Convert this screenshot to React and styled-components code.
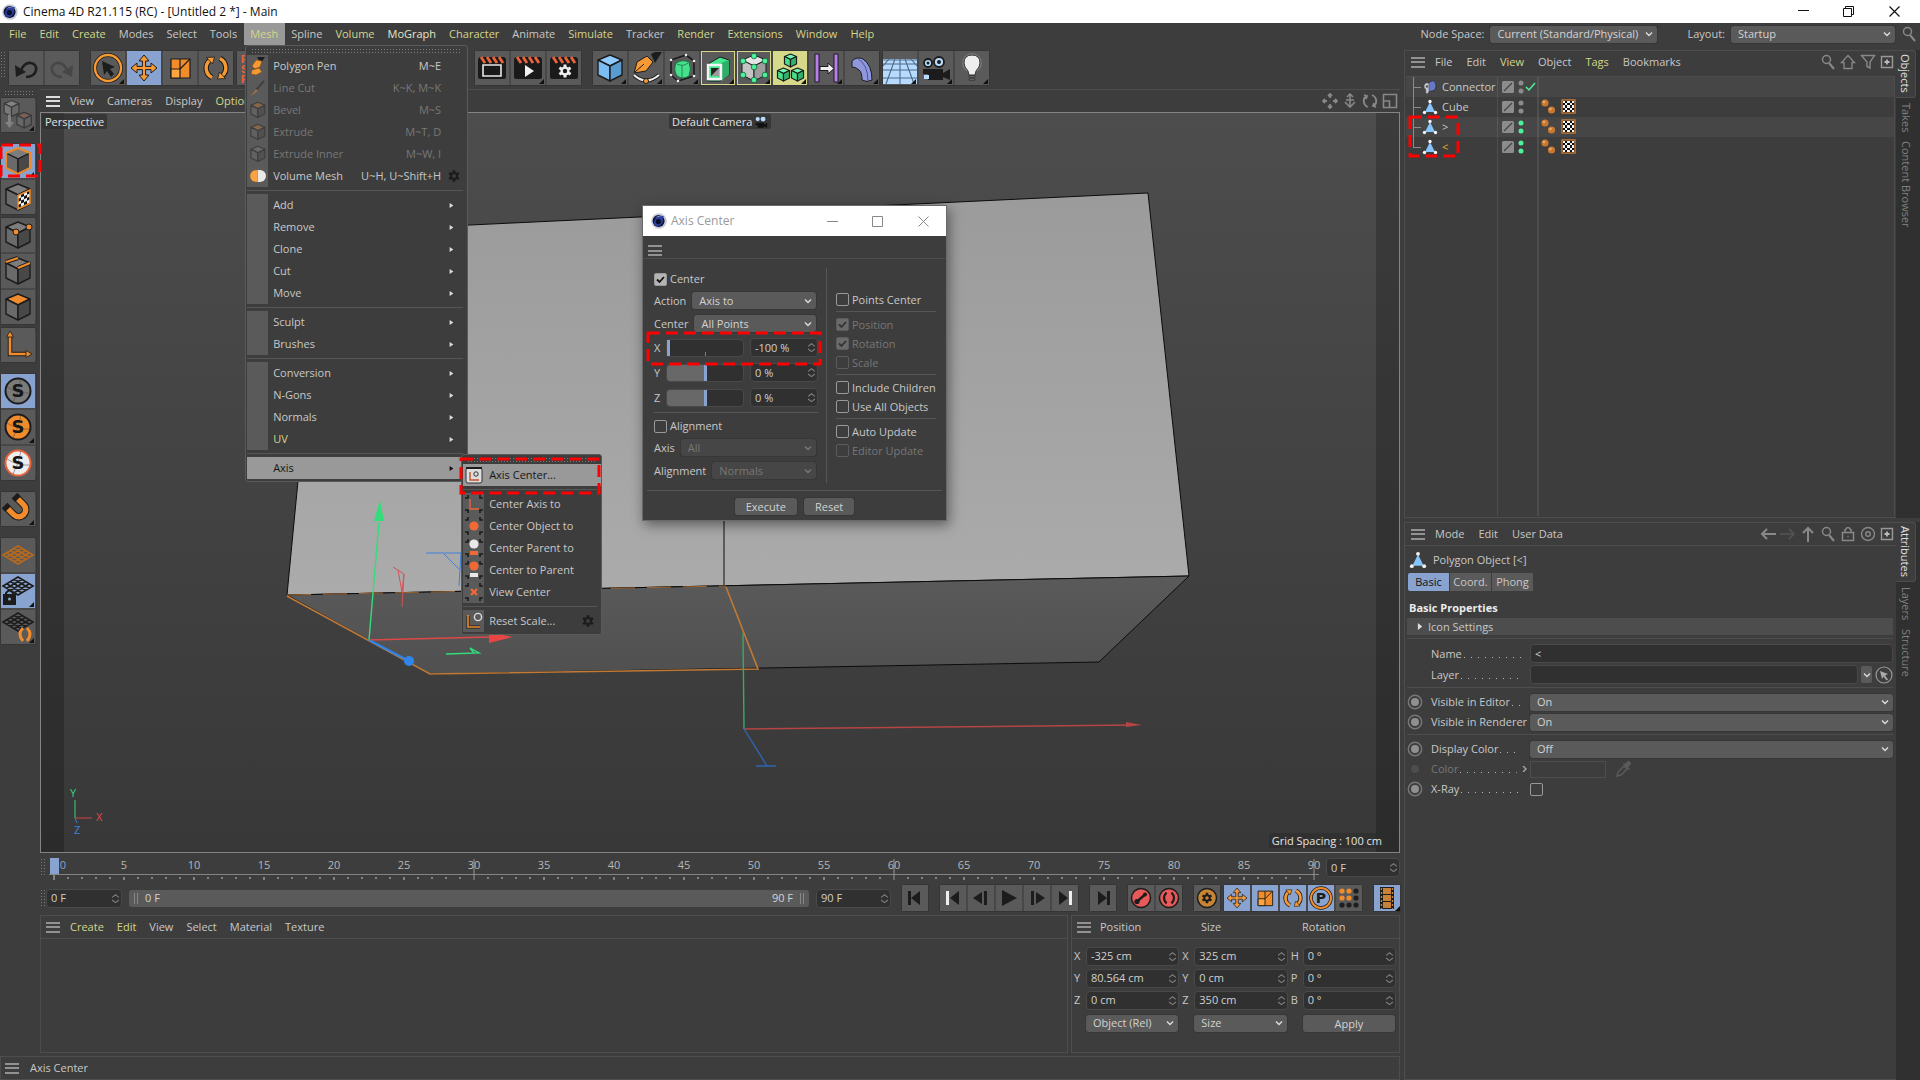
import React from "react";
import styled, { createGlobalStyle, css } from "styled-components";

const MENUS = [
  ["File", 1], ["Edit", 1], ["Create", 1], ["Modes", 0], ["Select", 0], ["Tools", 0],
  ["Mesh", 1], ["Spline", 0], ["Volume", 1], ["MoGraph", 2], ["Character", 1], ["Animate", 0],
  ["Simulate", 1], ["Tracker", 0], ["Render", 1], ["Extensions", 1], ["Window", 1], ["Help", 1],
];

const INK = "#1c1c1c";
const ORANGE = "#f08c2c";
const GREEN = "#4df29a";

/* ---------- icons ---------- */

const Ico = ({ s = 34, vb = 34, children }) => (
  <svg width={s} height={s} viewBox={`0 0 ${vb} ${vb}`} fill="none" aria-hidden="true">
    {children}
  </svg>
);

const Corner = () => <path d="M33 28v5h-5z" fill="#111" />;

const CubeShape = ({ top = "#7d7d7d", left = "#6a6a6a", right = "#484848", line = INK, w = 1.4 }) => (
  <g stroke={line} strokeWidth={w} strokeLinejoin="round">
    <path d="M17 4l12 5-12 6-12-6z" fill={top} />
    <path d="M5 9l12 6v15L5 24z" fill={left} />
    <path d="M29 9l-12 6v15l12-6z" fill={right} />
  </g>
);

const Logo = ({ s = 16 }) => (
  <Ico s={s} vb={16}>
    <circle cx="8" cy="8" r="7.800" fill="#c9ccd6" />
    <circle cx="7.600" cy="8" r="6" fill="#0d1238" />
    <path d="M3 10c0-5 4-7 10-7-1 1-1 2-1 4 0 4-3 6-6 6-2 0-3-1-3-3z" fill="#2b3f9c" />
    <circle cx="7.400" cy="8.600" r="2.600" fill="#0a0e2a" />
    <path d="M4 5c2-2 5-3 8-2-3 0-5 1-8 2z" fill="#8fa2e8" />
  </Ico>
);

const MoveGlyph = () => (
  <g stroke={INK} strokeWidth="1" fill="#f79a35" strokeLinejoin="round">
    <path d="M17 4l5 6h-3.400v5.400H24V12l6 5-6 5v-3.400h-5.400V24H22l-5 6-5-6h3.400v-5.400H10V22l-6-5 6-5v3.400h5.400V10H12z" />
  </g>
);

const ScaleGlyph = () => (
  <g stroke={INK} strokeWidth="1.200" fill="#f28c2a">
    <path d="M8 8h19v19H8z" />
    <path d="M8 18h9v9H8z" fill="#ffa53f" />
    <path d="M17 18l10-10M17 18V8" />
  </g>
);

const RotateGlyph = () => (
  <g>
    <path d="M13 26.500A10.500 10.500 0 0 1 11 9M21 7.500A10.500 10.500 0 0 1 23 25" stroke={INK} strokeWidth="5.500" />
    <path d="M13 26.500A10.500 10.500 0 0 1 11 9M21 7.500A10.500 10.500 0 0 1 23 25" stroke="#f79a35" strokeWidth="3.400" />
    <path d="M7.500 6.500l8-.5-2 7zM26.500 27.500l-8 .5 2-7z" fill="#f79a35" stroke={INK} strokeWidth=".8" />
  </g>
);

const GearPath = ({ color = "#1c1c1c", hole = "#3d3d3d" }) => (
  <g>
    <circle cx="8" cy="8" r="4.600" fill={color} />
    <path d="M8 1.500v13M2.400 4.800l11.200 6.400M13.600 4.800L2.400 11.200" stroke={color} strokeWidth="3" />
    <circle cx="8" cy="8" r="2.200" fill={hole} />
  </g>
);

const Gear = () => (
  <Ico s={14} vb={16}><GearPath /></Ico>
);

const Clap = ({ children }) => (
  <Ico>
    <path d="M3 9q0-3 3-3h22q3 0 3 3v17q0 2-2 2H5q-2 0-2-2z" fill="#1a1a1a" />
    <path d="M6 6l4 6M12 6l4 6M18 6l4 6M24 6l4 6" stroke="#e9643c" strokeWidth="2.800" />
    {children}
  </Ico>
);

const Checker = ({ x, y, c }) => (
  <g>
    <rect x={x} y={y} width={c * 4} height={c * 4} fill="#f2f2f2" />
    {[0, 1, 2, 3].map((r) =>
      [0, 1, 2, 3].map((k) =>
        (r + k) % 2 ? <rect key={`${r}${k}`} x={x + k * c} y={y + r * c} width={c} height={c} fill="#151515" /> : null
      )
    )}
  </g>
);

const GridPlane = ({ color }) => (
  <path
    d="M17 3L32 12 17 21 2 12zM13.200 5.300l15 9M9.500 7.500l15 9M5.700 9.800l15 9M20.800 5.300l-15 9M24.500 7.500l-15 9M28.300 9.800l-15 9"
    stroke={color} strokeWidth="1.600"
  />
);

const Solo = ({ fill, ring = INK, children }) => (
  <Ico>
    <circle cx="17" cy="17" r="12.500" fill={fill} stroke={ring} strokeWidth="2" />
    <path d="M6 13q11 7 22 6M20 5q-2 12-8 23" stroke="#444" strokeWidth=".8" opacity=".6" />
    <text x="17" y="23" textAnchor="middle" fontFamily="DejaVu Sans" fontWeight="700" fontSize="18" fill="#161616">S</text>
    {children}
  </Ico>
);

const ICONS = {
  undo: (
    <Ico><path d="M17 26c12 0 13-13 5-14-5-1-8 3-10 7" stroke="#1e1e1e" strokeWidth="2.600" /><path d="M6 14l1 12 10-5z" fill="#1e1e1e" /></Ico>
  ),
  redo: (
    <Ico><path d="M17 26c-12 0-13-13-5-14 5-1 8 3 10 7" stroke="#474747" strokeWidth="2.600" /><path d="M28 14l-1 12-10-5z" fill="#474747" /></Ico>
  ),
  select: (
    <Ico><circle cx="17" cy="17" r="13" stroke={INK} strokeWidth="4" /><circle cx="17" cy="17" r="13" stroke="#f79a35" strokeWidth="2.400" />
      <path d="M11 10l13 6-5 2 4 5-3 3-4-6-3 4z" fill={INK} /><Corner /></Ico>
  ),
  move: <Ico><MoveGlyph /></Ico>,
  scale: <Ico><ScaleGlyph /></Ico>,
  rotate: <Ico><RotateGlyph /></Ico>,
  psr: (
    <Ico><text x="4" y="12" fontFamily="Liberation Sans" fontWeight="700" fontSize="11" fill="#e9643c">P</text>
      <text x="4" y="22" fontFamily="Liberation Sans" fontWeight="700" fontSize="11" fill="#e9643c">S</text>
      <text x="4" y="32" fontFamily="Liberation Sans" fontWeight="700" fontSize="11" fill="#e9643c">R</text></Ico>
  ),
  render: <Clap><path d="M8 14h18v11H8z" stroke="#e8e8e8" strokeWidth="1.600" /></Clap>,
  renderPv: <Clap><path d="M14 14l9 6-9 6z" fill="#f2f2f2" /><Corner /></Clap>,
  renderSet: (
    <Clap><g transform="translate(10 12)"><GearPath color="#eee" hole="#1a1a1a" /></g></Clap>
  ),
  cube: <Ico><CubeShape top="#8fcbff" left="#7cbcf5" right="#5a9bd0" /><Corner /></Ico>,
  pen: (
    <Ico><path d="M5 24q12 11 25 0" stroke={INK} strokeWidth="4" /><path d="M5 24q12 11 25 0" stroke="#eee" strokeWidth="2.200" />
      <path d="M22 3l4-2h7L26 12z" fill={INK} /><path d="M5 22L8 11l10-6 6 6-7 9z" fill="#f79a35" stroke={INK} /><path d="M6 21l9-8" stroke={INK} />
      <circle cx="17" cy="30" r="2.500" fill="#f79a35" stroke={INK} /><Corner /></Ico>
  ),
  subdiv: (
    <Ico><path d="M6 9l15-5 8 6v15l-16 5-7-6z" stroke={INK} strokeWidth="1.600" /><path d="M11 12q6-4 13-1 3 7 0 14-6 4-12 0-4-6-1-13z" fill="#46e08c" stroke="#1d6b43" />
      <path d="M12 13q6 3 11-1M17 14v12" stroke="#1d8a52" /><g fill="#eee"><circle cx="6" cy="9" r="1.300" /><circle cx="21" cy="4" r="1.300" /><circle cx="29" cy="10" r="1.300" /><circle cx="29" cy="25" r="1.300" /><circle cx="13" cy="30" r="1.300" /><circle cx="6" cy="24" r="1.300" /></g><Corner /></Ico>
  ),
  extrude: (
    <Ico><path d="M7 13l12-7 9 3v15l-9 6H7z" fill="#46e890" stroke={INK} /><path d="M20 12l8-3v15l-8 6z" fill="#2fae6a" />
      <path d="M7 14h13v14H7z" stroke="#f4f4f4" strokeWidth="2.400" fill="#46e890" /><path d="M10 17h8v8h-8z" fill="#222" /><path d="M10 25l8-8v8z" fill="#9a9a9a" /><Corner /></Ico>
  ),
  lattice: (
    <Ico><CubeShape top="#e4e4e4" left="#c4c4c4" right="#9d9d9d" w={1} />
      <g fill={GREEN} stroke="#156138" strokeWidth=".8">{[[17, 5], [6, 10], [28, 10], [17, 16], [6, 24], [28, 24], [17, 29]].map(([a, b]) => <circle key={`${a}-${b}`} cx={a} cy={b} r="2.800" />)}</g><Corner /></Ico>
  ),
  cloner: (
    <Ico>{[[9, 1], [2, 15], [16, 15]].map(([a, b]) => (
      <g key={a} transform={`translate(${a} ${b}) scale(.5)`}><CubeShape top="#6df5b0" left="#46e08c" right="#2fb36e" w={2.400} /></g>
    ))}<Corner /></Ico>
  ),
  field: (
    <Ico><g fill="#b77ff0" stroke={INK}><path d="M6 3h4v28H6zM25 3h4v28h-4z" /></g><path d="M11 15.500h8V12l6 5.500-6 5.500v-3.500h-8z" fill="#eee" stroke={INK} /><Corner /></Ico>
  ),
  bend: (
    <Ico><path d="M7 10q5-5 11-2 9 6 9 21-5 3-10 0 0-8-3-10-3-3-7-3z" fill="#8f97dd" stroke={INK} strokeLinejoin="round" /><path d="M12 7q11 6 11 23" stroke="#4b549b" /><Corner /></Ico>
  ),
  floor: (
    <Ico><path d="M0 8h34v25H0z" fill="#b7dbff" /><path d="M0 9h34M0 13h34M0 19h34M0 27h34M17 8v25M12 8L3 33M22 8l9 25M6 8L0 15M28 8l6 7" stroke="#4d6a88" strokeWidth="1.100" /><Corner /></Ico>
  ),
  camera: (
    <Ico><circle cx="9" cy="12" r="4" fill="#b7dbff" stroke={INK} strokeWidth="1.800" /><circle cx="20" cy="11" r="5" fill="#b7dbff" stroke={INK} strokeWidth="1.800" /><circle cx="9" cy="12" r="1.500" fill={INK} /><circle cx="20" cy="11" r="2" fill={INK} />
      <path d="M4 18h20v4l7-4v11l-7-3v3H9v-6H4z" fill={INK} /><path d="M5 24h5v4H5z" fill="#b7dbff" /><Corner /></Ico>
  ),
  light: (
    <Ico><circle cx="17" cy="12" r="10" fill="#777" /><path d="M17 4q8 0 8 8 0 4-4 8l-1 4h-6l-1-4q-4-4-4-8 0-8 8-8z" fill="#eee" stroke="#333" /><path d="M14 25h6v1h-6zM14 28h6v1h-6z" fill="#ddd" stroke="#222" strokeWidth=".8" /><Corner /></Ico>
  ),
  editable: (
    <Ico><g opacity=".5"><g transform="translate(0 0) scale(.62)"><CubeShape top="#aaa" left="#999" right="#777" w={2} /></g><g transform="translate(13 12) scale(.6)"><CubeShape top="#a0624c" left="#777" right="#666" w={2} /></g><path d="M7 17h3v7h3l-4.500 6L4 24h3z" fill="#aaa" /></g><Corner /></Ico>
  ),
  model: (
    <Ico><CubeShape w={1.200} /><path d="M17 4l12 5v15l-12 6-12-6V9z" stroke={ORANGE} strokeWidth="2" /><Corner /></Ico>
  ),
  texture: (
    <Ico><CubeShape /><g transform="matrix(1 -.46 0 1 0 15.800)"><Checker x={17} y={8} c={3} /><rect x="17" y="7.500" width="12" height="13.500" stroke={ORANGE} strokeWidth="1.600" /></g></Ico>
  ),
  point: <Ico><CubeShape /><circle cx="15" cy="14" r="3" fill={ORANGE} stroke={INK} /><circle cx="28" cy="9" r="3" fill={ORANGE} stroke={INK} /></Ico>,
  edge: <Ico><CubeShape /><path d="M5 8l12-4M17 14l12-5" stroke={INK} strokeWidth="4" /><path d="M5 8l12-4M17 14l12-5" stroke={ORANGE} strokeWidth="2.200" /></Ico>,
  poly: <Ico><CubeShape top={ORANGE} /></Ico>,
  axis: <Ico><path d="M9 8v18h18" stroke={INK} strokeWidth="4.500" /><path d="M9 8v18h18" stroke={ORANGE} strokeWidth="2.600" /><path d="M9 3l3.500 6h-7zM31 26l-6-3.500v7z" fill={ORANGE} stroke={INK} strokeWidth=".8" /></Ico>,
  soloOff: <Solo fill="#7b7b7b" />,
  soloOn: <Solo fill={ORANGE}><Corner /></Solo>,
  soloHi: <Solo fill="#eee" ring="#e9643c" />,
  magnet: (
    <Ico><g transform="rotate(-45 17 17)"><path d="M10 8v10a7 7 0 0 0 14 0V8" stroke={INK} strokeWidth="7.500" /><path d="M10 9v9a7 7 0 0 0 14 0V9" stroke={ORANGE} strokeWidth="5.500" /><path d="M6 5h8v5H6zM20 5h8v5h-8z" fill={INK} /></g><Corner /></Ico>
  ),
  plane: <Ico><g transform="translate(0 5)"><GridPlane color="#b8691b" /></g></Ico>,
  planeLock: <Ico><GridPlane color="#1c1c1c" /><path d="M5 21v-2q3.500-5 7 0v2" stroke={INK} strokeWidth="2" /><path d="M2 20h13v11H2z" fill={INK} /><circle cx="8.500" cy="25" r="1.500" fill="#88a3cf" /><Corner /></Ico>,
  planeAuto: <Ico><GridPlane color="#1c1c1c" /><path d="M22 18q-6 6 0 13M26 18q6 6 0 13" stroke={ORANGE} strokeWidth="3" /><Corner /></Ico>,
};

const ViewportIcon = ({ d, w = 1.6 }) => (
  <Ico s={16} vb={16}><path d={d} stroke="#888" strokeWidth={w} /></Ico>
);

const Search = ({ s = 16 }) => (
  <Ico s={s} vb={16}><circle cx="6.500" cy="5.500" r="4" stroke="#888" strokeWidth="1.500" /><path d="M9 9l5 6" stroke="#888" strokeWidth="2" /></Ico>
);
const PlusBox = () => (
  <Ico s={14} vb={14}><path d="M1.500 1.500h11v11h-11z" stroke="#999" strokeWidth="1.400" /><path d="M7 4.500v5M4.500 7h5" stroke="#bbb" strokeWidth="1.800" /></Ico>
);
const PolyObj = ({ s = 16 }) => (
  <Ico s={s} vb={16}>
    <path d="M8 3l5 10H3z" fill="#86c5fb" />
    <g fill="#f2f2f2"><circle cx="8" cy="2.500" r="1.700" /><circle cx="2.500" cy="13.500" r="1.700" /><circle cx="13.500" cy="13.500" r="1.700" /></g>
  </Ico>
);
const ConnectorIcon = () => (
  <Ico s={16} vb={16}>
    <path d="M6 4l5-2.500q3 2 3 5t-2 5L6 13z" fill="#6479c8" stroke="#222" strokeWidth=".6" />
    <path d="M2 6q3-4 5-1v8q-1 2-3 2l-.500-5q-2-1-1.500-4z" fill="#c4c8d6" stroke="#444" strokeWidth=".6" />
    <circle cx="5" cy="7.500" r="1.200" fill="#555" />
  </Ico>
);

/* ---------- shared parts ---------- */

const GlobalStyle = createGlobalStyle`
  * { box-sizing: border-box; }
  body { margin: 0; background: #3d3d3d; }
  body, button, input, select {
    font-family: "Open Sans", "Noto Sans", "Noto Sans CJK KR", sans-serif;
    font-size: 11px;
    line-height: 16px;
    color: #c8c8c8;
  }
  button, input, select { margin: 0; padding: 0; border: 0; background: none; outline: 0; }
  svg { display: block; flex: none; }
`;

const grip = css`
  background-image: radial-gradient(circle, #7a7a7a 0.5px, transparent 1px);
  background-size: 3px 3px;
`;

const GripV = styled.div`
  width: 6px;
  height: ${(p) => p.$h || 28}px;
  flex: none;
  ${grip}
`;
const GripH = styled.div`
  height: 6px;
  ${grip}
`;

const Burger = styled.button`
  width: 14px;
  height: 11px;
  flex: none;
  border-top: 2px solid ${(p) => p.$c || "#929292"};
  border-bottom: 2px solid ${(p) => p.$c || "#929292"};
  background: linear-gradient(${(p) => p.$c || "#929292"}, ${(p) => p.$c || "#929292"}) center / 100% 2px no-repeat;
`;

const MenuWord = styled.button`
  color: ${(p) => (p.$tone === 1 ? "#d3d68a" : p.$tone === 2 ? "#e6e6c8" : "#c8c8c8")};
  white-space: nowrap;
`;

const SelectBox = styled.span`
  display: grid;
  align-items: center;
  flex: ${(p) => (p.$w ? "none" : 1)};
  width: ${(p) => (p.$w ? `${p.$w}px` : "auto")};
  min-width: 0;
  select, svg { grid-area: 1 / 1; }
  select {
    appearance: none;
    width: 100%;
    height: 17px;
    padding: 0 18px 0 7px;
    border-radius: 3px;
    background: ${(p) => (p.$off ? "#464646" : "#5a5a5a")};
    color: ${(p) => (p.$off ? "#777" : "#d2d2d2")};
    opacity: 1;
    box-shadow: 0 0 0 1px #373737;
  }
  svg { justify-self: end; margin-right: 4px; pointer-events: none; }
`;

const Drop = ({ w, off, value, label }) => (
  <SelectBox $w={w} $off={off}>
    <select aria-label={label} disabled={off} defaultValue={value}>
      <option>{value}</option>
    </select>
    <Ico s={8} vb={8}><path d="M1 2.500l3 3 3-3" stroke={off ? "#777" : "#ddd"} strokeWidth="1.400" /></Ico>
  </SelectBox>
);

const FieldBox = styled.span`
  display: flex;
  align-items: center;
  flex: ${(p) => (p.$w ? "none" : 1)};
  width: ${(p) => (p.$w ? `${p.$w}px` : "auto")};
  min-width: 0;
  height: 19px;
  padding: 0 1px 0 4px;
  background: #303030;
  border: 1px solid #494949;
  border-radius: 4px;
  input { flex: 1; min-width: 0; width: 0; height: 16px; color: #d0d0d0; }
`;

const Num = ({ w, value, label }) => (
  <FieldBox $w={w}>
    <input aria-label={label} defaultValue={value} />
    <Ico s={9} vb={12}><path d="M1.500 4.500L6 1l4.500 3.500M1.500 8L6 11.500 10.500 8" stroke="#808080" strokeWidth="1.400" /></Ico>
  </FieldBox>
);

const TickLabel = styled.label`
  display: flex;
  align-items: center;
  gap: 3px;
  height: ${(p) => p.$h || 19}px;
  color: ${(p) => (p.$off ? "#777" : "#c8c8c8")};
  white-space: nowrap;
`;
const TickBox = styled.span`
  display: grid;
  place-items: center;
  input, svg { grid-area: 1 / 1; }
  svg { pointer-events: none; }
  input {
    appearance: none;
    width: 13px;
    height: 13px;
    border: 1px solid ${(p) => (p.$off ? "#5c5c5c" : "#999")};
    border-radius: 2px;
    &:checked { background: ${(p) => (p.$off ? "#6a6a6a" : "#b4b4b4")}; }
  }
`;

const Tick = ({ on, off, text, h, name }) => (
  <TickLabel $off={off} $h={h}>
    <TickBox $off={off}>
      <input type="checkbox" defaultChecked={on} disabled={off} aria-label={text || name} />
      {on && <Ico s={11} vb={11}><path d="M2 5.500l2.500 2.500L9 3" stroke={off ? "#333" : "#111"} strokeWidth="1.800" /></Ico>}
    </TickBox>
    {text}
  </TickLabel>
);

const PushButton = styled.button`
  height: 17px;
  padding: 0 11px;
  border-radius: 3px;
  background: #5a5a5a;
  color: #d2d2d2;
  line-height: 17px;
  box-shadow: 0 0 0 1px #373737;
`;

const MarkBox = styled.span`
  position: absolute;
  inset: ${(p) => p.$inset};
  pointer-events: none;
  z-index: 5;
  svg { width: 100%; height: 100%; overflow: visible; }
`;
const Mark = ({ inset }) => (
  <MarkBox $inset={inset}>
    <svg><rect width="100%" height="100%" fill="none" stroke="#fe0000" strokeWidth="3" strokeDasharray="12 6" /></svg>
  </MarkBox>
);
const MarkSlot = styled.div`
  position: absolute;
  top: ${(p) => p.$y}px;
  left: ${(p) => p.$x}px;
  width: ${(p) => p.$w}px;
  height: ${(p) => p.$h}px;
`;

/* ---------- window frame ---------- */

const Window = styled.div`
  display: flex;
  flex-direction: column;
  height: 100vh;
  background: #3d3d3d;
`;
const TitleBar = styled.header`
  display: flex;
  align-items: center;
  gap: 5px;
  height: 23px;
  padding: 0 20px 0 2px;
  background: #fff;
  color: #111;
  flex: none;
  h1 { flex: 1; margin: 0; font-size: 12px; font-weight: 400; }
`;
const WinButton = styled.button`
  display: grid;
  place-items: center;
  width: 11px;
  height: 20px;
  margin-left: ${(p) => p.$gap}px;
`;
const MenuBar = styled.nav`
  display: flex;
  align-items: center;
  height: 22px;
  padding: 0 3px;
  flex: none;
`;
const MenuSlot = styled.div`
  position: relative;
  height: 22px;
  background: ${(p) => (p.$open ? "#999" : "none")};
  > button { height: 22px; padding: 0 7px 0 6px; }
`;
const BarRight = styled.div`
  display: flex;
  align-items: center;
  gap: 6px;
  margin-left: auto;
  label { display: flex; align-items: center; gap: 6px; }
  label + label { margin-left: 24px; }
`;

const Body = styled.div`
  display: flex;
  gap: 4px;
  flex: 1;
  min-height: 0;
`;
const WorkArea = styled.div`
  display: flex;
  flex-direction: column;
  flex: 1;
  min-width: 0;
`;
const Toolbar = styled.div`
  display: flex;
  height: 44px;
  padding: 6px 0 4px;
  flex: none;
`;
const Group = styled.div`
  display: flex;
  flex-direction: ${(p) => (p.$col ? "column" : "row")};
  gap: 2px;
  margin: ${(p) => p.$m || "0"};
  background: #484848;
  border-radius: 3px;
  box-shadow: 0 0 0 1px #353535;
  flex: none;
`;
const Tool = styled.button`
  display: grid;
  place-items: center;
  width: ${(p) => p.$s || 34}px;
  height: ${(p) => p.$s || 34}px;
  background: ${(p) => (p.$on ? "#88a3cf" : p.$lit ? "#d6d88a" : "#5a5a5a")};
  box-shadow: ${(p) => (p.$edge ? "inset 0 0 0 1px #d6d88a" : "none")};
`;

const Middle = styled.div`
  display: flex;
  flex: 1;
  min-height: 0;
`;
const SideTools = styled.aside`
  position: relative;
  width: 40px;
  padding: 1px 4px 0 1px;
  flex: none;
  ${GripH} { margin: 0 3px 2px; }
`;
const Center = styled.main`
  display: flex;
  flex-direction: column;
  flex: 1;
  min-width: 0;
`;

/* ---------- viewport ---------- */

const ViewPanel = styled.section`
  display: flex;
  flex-direction: column;
  flex: 1;
  min-height: 0;
  border-top: 1px solid #4d4d4d;
`;
const PanelBar = styled.div`
  display: flex;
  align-items: center;
  gap: ${(p) => p.$gap || 16}px;
  height: ${(p) => p.$h || 22}px;
  padding: 0 2px 0 6px;
  flex: none;
  ${Burger} { margin-right: ${(p) => p.$burger || 0}px; }
`;
const BarIcons = styled.div`
  display: flex;
  align-items: center;
  gap: 4px;
  margin-left: auto;
`;
const Stage = styled.div`
  position: relative;
  flex: 1;
  min-height: 0;
  border: 1px solid #848484;
  background: linear-gradient(#4d4d4d, #383838);
  > svg { position: absolute; inset: 0; width: 100%; height: 100%; }
`;
const Chip = styled.span`
  position: absolute;
  display: flex;
  align-items: center;
  gap: 2px;
  height: 15px;
  padding: 0 3px;
  border-radius: 2px;
  background: rgba(45, 45, 45, 0.7);
  color: #e4e4e4;
  white-space: nowrap;
  inset: ${(p) => p.$at};
`;

const Scene = () => (
  <svg viewBox="41 113 1358 739" preserveAspectRatio="xMidYMid slice" aria-hidden="true">
    <defs>
      <linearGradient id="lit" x1="0" y1="0" x2="0" y2="1"><stop offset="0" stopColor="#9b9b9b" /><stop offset="1" stopColor="#ababab" /></linearGradient>
      <linearGradient id="under" x1="0" y1="0" x2="0" y2="1"><stop offset="0" stopColor="#5a5a5a" /><stop offset="1" stopColor="#505050" /></linearGradient>
    </defs>
    <path d="M41 113h23v739H41zM1376 113h23v739h-23z" fill="#000" opacity=".22" />
    <path d="M322 232L1148 193l41 383L287 595z" fill="url(#lit)" stroke="#0c0c0c" />
    <path d="M287 595l902-19-90 86-669 12z" fill="url(#under)" stroke="#0c0c0c" />
    <path d="M724 213v373" stroke="#0c0c0c" />
    <path d="M726 587l32 82-328 5-143-78" stroke="#c17a36" strokeWidth="1.600" fill="none" />
    <path d="M287 595l439-9" stroke="#c17a36" strokeDasharray="24 12" opacity=".8" />
    <g fill="none">
      <path d="M369 640l10-118" stroke="#33de7a" strokeWidth="1.400" />
      <path d="M380 500l4 21h-10z" fill="#33de7a" />
      <path d="M369 640l120-3" stroke="#e04848" strokeWidth="1.400" />
      <path d="M489 632v11l24-6z" fill="#e84545" />
      <path d="M369 640l40 21" stroke="#2f86ea" strokeWidth="2" />
      <circle cx="409" cy="661" r="5" fill="#2f86ea" />
      <path d="M393 567l11 7-2 33M398 570l4 22 2-18" stroke="#d65353" />
      <path d="M426 553h35l-2 33M444 554l15 15" stroke="#3f80d8" />
      <path d="M446 654l33-1-9-5 4 5" stroke="#33de7a" strokeWidth="1.400" />
      <path d="M744 729l-1-96" stroke="#3aa866" strokeWidth="1.400" />
      <path d="M744 729l390-4" stroke="#b54545" strokeWidth="1.400" />
      <path d="M1126 722l16 3-16 2z" fill="#b54545" />
      <path d="M744 729l23 37M756 766h20" stroke="#2f65b0" strokeWidth="1.400" />
      <path d="M75 800v18" stroke="#39d67c" />
      <path d="M75 818h17" stroke="#d04545" />
      <path d="M75 818l2 5" stroke="#3f80d8" />
    </g>
    <g fontFamily="Open Sans" fontSize="11">
      <text x="70" y="797" fill="#39d67c">Y</text>
      <text x="96" y="821" fill="#e04848">X</text>
      <text x="74" y="834" fill="#3f80d8">Z</text>
    </g>
  </svg>
);

/* ---------- mesh menu ---------- */

const Menu = styled.div`
  position: absolute;
  top: ${(p) => p.$top};
  left: ${(p) => p.$left};
  z-index: 4;
  width: ${(p) => p.$w}px;
  padding: 2px 0;
  background: #3d3d3d;
  border: 1px solid #5a5a5a;
  border-radius: 3px;
  > ${GripH} { margin: 0 5px 1px; }
`;
const MenuRows = styled.div`
  margin: 0 0 0 1px;
  background: linear-gradient(#5a5a5a, #5a5a5a) left / 21px 100% no-repeat;
  & + & { margin-top: 7px; }
  & + &::before {
    content: "";
    display: block;
    height: 7px;
    margin: -7px 4px 0 0;
    background: linear-gradient(#565656, #565656) center / 100% 1px no-repeat #3d3d3d;
  }
`;
const MenuRow = styled.button`
  position: relative;
  display: flex;
  align-items: center;
  width: 100%;
  height: 22px;
  color: ${(p) => (p.$hot ? "#161616" : p.$off ? "#787878" : p.$tone ? "#d3d68a" : "#c8c8c8")};
  background: ${(p) => (p.$hot ? "#999" : "none")};
  text-align: left;
`;
const RowIcon = styled.span`
  display: grid;
  place-items: center;
  width: 21px;
  margin-right: 5px;
  opacity: ${(p) => (p.$off ? 0.45 : 1)};
`;
const RowTail = styled.span`
  margin-left: auto;
  padding-right: ${(p) => p.$pad}px;
`;

const Small = ({ children }) => <Ico s={20} vb={20}>{children}</Ico>;
const Brackets = () => <path d="M1 4h3V1M19 4h-3V1M1 16h3v3M19 16h-3v3" stroke="#1c1c1c" strokeWidth="1.600" />;
const ROW_ICONS = {
  pen: <Small><path d="M9 1h8l-4 6z" fill={INK} /><path d="M4 10l4-6 6 1-2 6-5 2zM4 14l7-2 3 4-6 3-5-1z" fill="#f79a35" stroke="#7a4812" strokeWidth=".6" /></Small>,
  knife: <Small><path d="M16 3L8 12" stroke="#222" strokeWidth="2" /><path d="M8 11l2 2-7 5z" fill={ORANGE} /></Small>,
  bevel: <Small><g transform="scale(.58)"><CubeShape top="#b8763a" w={2} /></g></Small>,
  inner: <Small><g transform="scale(.58)"><CubeShape w={2} /></g></Small>,
  volume: <Small><path d="M10 4v12H8a6 6 0 0 1 0-12z" fill="#f7a544" stroke="#a86a1f" strokeWidth=".5" /><path d="M10 4h2a6 6 0 0 1 0 12h-2z" fill="#e8e8e8" /></Small>,
  axisCenter: <Small><rect x="2" y="3" width="16" height="15" rx="2" fill="#ddd" stroke="#333" /><path d="M2 3h16" stroke={INK} strokeWidth="2" /><path d="M6 7v8h9" stroke="#c4512c" strokeWidth="1.400" /><circle cx="12" cy="9" r="2.200" stroke="#333" /></Small>,
  axisTo: <Small><Brackets /><path d="M6 5v10h9" stroke="#e9643c" strokeWidth="1.400" /></Small>,
  objTo: <Small><Brackets /><circle cx="10" cy="10" r="4.600" fill="#f06a35" /></Small>,
  parTo: <Small><Brackets /><circle cx="10" cy="6" r="4.600" fill="#e8e8e8" /><path d="M6 13h8v4H6z" fill="#f06a35" /></Small>,
  toPar: <Small><Brackets /><circle cx="10" cy="6" r="4.600" fill="#f06a35" /><path d="M6 13h8v4H6z" fill="#e8e8e8" /></Small>,
  view: <Small><Brackets /><path d="M7 7l6 6M13 7l-6 6" stroke="#f06a35" strokeWidth="2.400" /></Small>,
  reset: <Small><path d="M4 5v11h12" stroke={INK} strokeWidth="3" /><path d="M4 4v12h12" stroke={ORANGE} strokeWidth="1.600" /><circle cx="14" cy="6" r="3.600" stroke="#ddd" strokeWidth="1.400" /></Small>,
};

const GearSlot = styled.span`
  display: grid;
  place-items: center;
  width: 26px;
`;

const Row = ({ icon, text, keys, off, tone, hot, sub, gear, children }) => (
  <MenuRow as={children ? "div" : "button"} $off={off} $tone={tone} $hot={hot} disabled={children ? undefined : off}>
    <RowIcon $off={off}>{icon && ROW_ICONS[icon]}</RowIcon>
    {text}
    {keys && <RowTail $pad={gear ? 0 : 26}>{keys}</RowTail>}
    {gear && !keys && <RowTail $pad={0} />}
    {gear && <GearSlot><Gear /></GearSlot>}
    {sub && (
      <RowTail $pad={13}><Ico s={5} vb={8}><path d="M1 0l6 4-6 4z" fill={hot ? "#111" : "#ddd"} /></Ico></RowTail>
    )}
    {children}
  </MenuRow>
);

const MeshMenu = () => (
  <Menu $top="100%" $left="1px" $w={223}>
    <GripH />
    <MenuRows>
      <Row icon="pen" text="Polygon Pen" keys="M~E" />
      <Row icon="knife" text="Line Cut" keys="K~K, M~K" off />
      <Row icon="bevel" text="Bevel" keys="M~S" off />
      <Row icon="bevel" text="Extrude" keys="M~T, D" off />
      <Row icon="inner" text="Extrude Inner" keys="M~W, I" off />
      <Row icon="volume" text="Volume Mesh" keys="U~H, U~Shift+H" gear />
    </MenuRows>
    <MenuRows>
      {["Add", "Remove", "Clone", "Cut", "Move"].map((t) => <Row key={t} text={t} sub />)}
    </MenuRows>
    <MenuRows>
      {["Sculpt", "Brushes"].map((t) => <Row key={t} text={t} sub />)}
    </MenuRows>
    <MenuRows>
      {["Conversion", "N-Gons", "Normals"].map((t) => <Row key={t} text={t} sub />)}
      <Row text="UV" sub tone />
    </MenuRows>
    <MenuRows>
      <Row text="Axis" sub hot>
        <Menu $top="-3px" $left="214px" $w={141}>
          <GripH />
          <MenuRows><Row icon="axisCenter" text="Axis Center..." hot /></MenuRows>
          <MenuRows>
            <Row icon="axisTo" text="Center Axis to" />
            <Row icon="objTo" text="Center Object to" />
            <Row icon="parTo" text="Center Parent to" />
            <Row icon="toPar" text="Center to Parent" />
            <Row icon="view" text="View Center" />
          </MenuRows>
          <MenuRows><Row icon="reset" text="Reset Scale..." gear /></MenuRows>
          <Mark inset="4px 2px 141px -1px" />
        </Menu>
      </Row>
    </MenuRows>
  </Menu>
);

/* ---------- axis center dialog ---------- */

const Dialog = styled.section`
  position: absolute;
  top: 92px;
  left: 601px;
  width: 305px;
  background: #3d3d3d;
  border: 1px solid #6a6a6a;
  box-shadow: 2px 4px 12px rgba(0, 0, 0, 0.45);
`;
const DialogTitle = styled.div`
  display: flex;
  align-items: center;
  height: 30px;
  padding: 0 17px 0 8px;
  background: #fff;
  h2 { flex: 1; margin: 0 0 0 4px; font-size: 12px; font-weight: 400; color: #999; }
`;
const DialogBar = styled.div`
  padding: 6px 5px;
  height: 23px;
  border-bottom: 1px solid #4d4d4d;
`;
const DialogBody = styled.div`
  display: grid;
  grid-template-columns: 173px 1fr;
  padding: 9px 11px 7px;
`;
const DialogLeft = styled.div`
  border-right: 1px solid #565656;
  padding: 1px 8px 1px 0;
`;
const DialogRight = styled.div`
  padding: 22px 0 0 9px;
`;
const Line = styled.hr`
  height: 1px;
  margin: 2px 0 3px;
  border: 0;
  background: #565656;
`;
const FormRow = styled.div`
  display: flex;
  align-items: center;
  gap: 6px;
  height: ${(p) => p.$h || 23}px;
  > span:last-child { margin-right: ${(p) => (p.$h ? 0 : 2)}px; }
`;
const AxisName = styled.span`
  width: 6px;
`;
const Slider = styled.input`
  appearance: none;
  width: 78px;
  height: 18px;
  border: 1px solid #494949;
  border-radius: 4px;
  background:
    linear-gradient(#6d7c92, #6d7c92) 50% 100% / 1px 4px no-repeat,
    linear-gradient(to right, #686868 ${(p) => p.$fill}%, #303030 ${(p) => p.$fill}%);
  &::-webkit-slider-thumb { appearance: none; width: 3px; height: 16px; background: #88a3cf; }
`;
const DialogFoot = styled.footer`
  display: flex;
  justify-content: center;
  gap: 7px;
  margin: 0 4px;
  padding: 7px 0 5px;
  border-top: 1px solid #565656;
`;
const Marked = styled.div`
  position: relative;
`;

const XYZ = ({ name, pos, text }) => (
  <FormRow $h={25}>
    <AxisName>{name}</AxisName>
    <Slider type="range" min="0" max="100" defaultValue={pos} $fill={pos} aria-label={`${name} slider`} />
    <Num value={text} label={name} />
  </FormRow>
);

const AxisCenterDialog = () => (
  <Dialog>
    <DialogTitle>
      <Logo />
      <h2>Axis Center</h2>
      <WinButton aria-label="Minimize"><Ico s={11} vb={11}><path d="M0 5.500h11" stroke="#888" /></Ico></WinButton>
      <WinButton $gap={34} aria-label="Maximize"><Ico s={11} vb={11}><path d="M.5.500h10v10H.5z" stroke="#888" /></Ico></WinButton>
      <WinButton $gap={35} aria-label="Close"><Ico s={11} vb={11}><path d="M.5.500l10 10M10.500.500l-10 10" stroke="#888" /></Ico></WinButton>
    </DialogTitle>
    <DialogBar><Burger aria-label="Menu" /></DialogBar>
    <DialogBody>
      <DialogLeft>
        <Tick on text="Center" h={20} />
        <FormRow>Action<Drop value="Axis to" label="Action" /></FormRow>
        <FormRow>Center<Drop value="All Points" label="Center" /></FormRow>
        <Marked><XYZ name="X" pos={0} text="-100 %" /><Mark inset="-2px -2px -4px -6px" /></Marked>
        <XYZ name="Y" pos={50} text="0 %" />
        <XYZ name="Z" pos={50} text="0 %" />
        <Line />
        <Tick text="Alignment" h={20} />
        <FormRow>Axis<Drop off value="All" label="Axis" /></FormRow>
        <FormRow>Alignment<Drop off value="Normals" label="Alignment" /></FormRow>
      </DialogLeft>
      <DialogRight>
        <Tick text="Points Center" />
        <Line />
        <Tick on off text="Position" />
        <Tick on off text="Rotation" />
        <Tick off text="Scale" />
        <Line />
        <Tick text="Include Children" />
        <Tick text="Use All Objects" />
        <Line />
        <Tick text="Auto Update" />
        <Tick off text="Editor Update" />
      </DialogRight>
    </DialogBody>
    <DialogFoot><PushButton>Execute</PushButton><PushButton>Reset</PushButton></DialogFoot>
  </Dialog>
);

/* ---------- timeline ---------- */

const Timeline = styled.div`
  display: flex;
  align-items: flex-start;
  height: 31px;
  padding-top: 5px;
  flex: none;
`;
const Ruler = styled.div`
  flex: 1;
  height: 24px;
  margin: 0 7px 0 3px;
  padding: 0 5px;
  background: linear-gradient(#848484, #848484) 0 16px / 100% 1px no-repeat;
  svg { width: 100%; height: 24px; overflow: visible; }
`;
const Transport = styled.div`
  display: flex;
  align-items: center;
  height: 28px;
  flex: none;
`;
const RangeBar = styled.div`
  display: flex;
  align-items: center;
  flex: 1;
  gap: 7px;
  height: 17px;
  margin: 0 7px;
  padding: 0 5px;
  border-radius: 3px;
  background: #5a5a5a;
  color: #d2d2d2;
  > span:last-of-type { margin-left: auto; }
  i { width: 4px; height: 11px; border: solid #868686; border-width: 0 1px; }
`;

const FRAMES = Array.from({ length: 91 }, (_, i) => i);

const TimeRuler = () => (
  <Ruler>
    <svg>
      <rect x="-4" y="0" width="9" height="16" fill="#88a3cf" />
      {FRAMES.map((f) => {
        const x = `${(f / 90) * 100}%`;
        const long = f % 30 === 0 && f > 0;
        return (
          <g key={f}>
            <line x1={x} x2={x} y1={long ? 1 : f === 0 ? 17 : 19} y2={f % 5 ? 21 : 22} stroke={long ? "#999" : "#c8c8c8"} />
            {f % 5 === 0 && (
              <text x={x} dx={f ? 0 : 9} y="11" textAnchor="middle" fill={f ? "#b8b8b8" : "#88a3cf"}>{f}</text>
            )}
          </g>
        );
      })}
    </svg>
  </Ruler>
);

const T = ({ children }) => <Ico s={26} vb={26}>{children}</Ico>;
const PLAY = {
  start: <T><path d="M6 6h3v14H6zM18 6v14l-9-7z" fill={INK} /></T>,
  prevKey: <T><path d="M6 6h3v14H6z" fill="#eee" /><path d="M19 6v14l-9-7z" fill={INK} /></T>,
  prev: <T><path d="M14 7v12l-9-6zM16 6h3v14h-3z" fill={INK} /></T>,
  play: <T><path d="M6 5l15 8-15 8z" fill={INK} /></T>,
  next: <T><path d="M12 7v12l9-6zM7 6h3v14H7z" fill={INK} /></T>,
  nextKey: <T><path d="M17 6h3v14h-3z" fill="#eee" /><path d="M7 6v14l9-7z" fill={INK} /></T>,
  end: <T><path d="M17 6h3v14h-3zM8 6v14l9-7z" fill={INK} /></T>,
  rec: <T><circle cx="13" cy="13" r="9.500" fill="#e85a5a" stroke={INK} strokeWidth="1.500" /><path d="M9 16.500L16.500 10" stroke={INK} strokeWidth="2.400" /><circle cx="9" cy="16.500" r="2.600" fill={INK} /><circle cx="17" cy="9.500" r="2" fill={INK} /></T>,
  auto: <T><circle cx="13" cy="13" r="9.500" fill="#e85a5a" stroke={INK} strokeWidth="1.500" /><path d="M10.500 7.500q-5 5.500 0 11M15.500 7.500q5 5.500 0 11" stroke={INK} strokeWidth="2.200" /></T>,
  keySel: <T><circle cx="13" cy="13" r="9.500" fill="#c98436" stroke={INK} strokeWidth="1.500" /><g transform="translate(6.600 6.600) scale(.8)"><GearPath hole="#c98436" /></g></T>,
  move: <Ico s={26}><MoveGlyph /></Ico>,
  scale: <Ico s={26}><ScaleGlyph /></Ico>,
  rotate: <Ico s={26}><RotateGlyph /></Ico>,
  param: <T><circle cx="13" cy="13" r="10" stroke={INK} strokeWidth="3.500" /><circle cx="13" cy="13" r="10" stroke={ORANGE} strokeWidth="2" /><text x="13" y="18" textAnchor="middle" fontFamily="DejaVu Sans" fontWeight="700" fontSize="14" fill={INK}>P</text></T>,
  dots: <T>{[6, 13, 20].map((y, r) => [6, 13, 20].map((x, c) => <circle key={`${x}${y}`} cx={x} cy={y} r="2.600" fill={r < 2 && c < 2 ? ORANGE : "#1e1e1e"} />))}</T>,
  film: <T><path d="M6 2h14v22H6z" fill={INK} /><path d="M9 3h8v6H9zM9 10h8v6H9zM9 17h8v6H9z" fill="#c9813a" /><path d="M7.500 3v21M18.500 3v21" stroke="#c9813a" strokeWidth="1.400" strokeDasharray="2 2" /><path d="M26 21v5h-5z" fill="#111" /></T>,
};

const PlayGroup = ({ items, on, m }) => (
  <Group $m={m}>
    {items.map((k) => <Tool key={k} $s={26} $on={on && k !== "dots"} aria-label={k}>{PLAY[k]}</Tool>)}
  </Group>
);

/* ---------- bottom panels ---------- */

const BottomRow = styled.div`
  display: flex;
  gap: 3px;
  height: 138px;
  margin: 3px 0;
  flex: none;
`;
const Panel = styled.section`
  border: 1px solid #4d4d4d;
  flex: ${(p) => (p.$w ? "none" : 1)};
  width: ${(p) => (p.$w ? `${p.$w}px` : "auto")};
  > ${PanelBar} { border-bottom: 1px solid #4d4d4d; height: 23px; padding-left: 5px; }
`;
const CoordHead = styled.div`
  display: grid;
  grid-template-columns: 101px 101px 1fr;
  flex: 1;
  margin-left: -3px;
`;
const CoordGrid = styled.div`
  display: grid;
  grid-template-columns: repeat(3, 9px 1fr);
  align-items: center;
  column-gap: 3px;
  grid-auto-rows: 22px;
  padding: 6px 3px 0 2px;
  > button, > span { min-width: 0; }
`;
const PushRow = styled.div`
  grid-column: span 2;
  display: flex;
  padding: 2px 1px 0 12px;
  height: 24px;
  align-items: center;
  > * { flex: 1; }
`;
const StatusBar = styled.footer`
  display: flex;
  align-items: center;
  gap: 11px;
  height: 24px;
  padding: 0 4px;
  border: 1px solid #4d4d4d;
  flex: none;
`;

const COORDS = [
  ["X", "-325 cm", "X", "325 cm", "H", "0 °"],
  ["Y", "80.564 cm", "Y", "0 cm", "P", "0 °"],
  ["Z", "0 cm", "Z", "350 cm", "B", "0 °"],
];

/* ---------- managers on the right ---------- */

const Managers = styled.div`
  display: flex;
  flex-direction: column;
  gap: 4px;
  width: 516px;
  padding-top: 5px;
  flex: none;
`;
const Manager = styled.section`
  display: flex;
  flex: ${(p) => p.$flex} 1 0;
  min-height: 0;
`;
const ManagerMain = styled.div`
  display: flex;
  flex-direction: column;
  flex: 1;
  min-width: 0;
  border: 1px solid #4d4d4d;
  border-right: 0;
`;
const TabStrip = styled.div`
  display: flex;
  flex-direction: column;
  align-items: flex-start;
  width: 24px;
  background: #303030;
`;
const SideTab = styled.button`
  writing-mode: vertical-rl;
  width: 20px;
  padding: ${(p) => (p.$on ? "3px 0 4px" : "5px 0 4px")};
  background: ${(p) => (p.$on ? "#3d3d3d" : "none")};
  border: ${(p) => (p.$on ? "1px solid #4d4d4d" : "0")};
  border-left: 0;
  border-radius: 0 3px 3px 0;
  color: ${(p) => (p.$on ? "#e0e0e0" : "#808080")};
  line-height: 20px;
`;
const ListWrap = styled.div`
  position: relative;
  flex: 1;
  margin: 3px 1px 1px;
  border-top: 1px solid #4d4d4d;
  border-right: 1px solid #4d4d4d;
  background:
    linear-gradient(#4d4d4d, #4d4d4d) 91px 0 / 1px 100% no-repeat,
    linear-gradient(#4d4d4d, #4d4d4d) 131px 0 / 2px 100% no-repeat;
`;
const ObjectTable = styled.table`
  width: 100%;
  table-layout: fixed;
  border-collapse: collapse;
  td { height: 20px; padding: 0; }
  tr:nth-child(odd) { background: rgba(255, 255, 255, 0.05); }
  td > div { display: flex; align-items: center; height: 20px; }
`;
const Branch = styled.span`
  width: 9px;
  height: 20px;
  margin-left: 7px;
  background:
    linear-gradient(#8a8a8a, #8a8a8a) 0 0 / 1px ${(p) => (p.$last ? "10px" : "100%")} no-repeat,
    linear-gradient(#8a8a8a, #8a8a8a) 0 10px / 8px 1px no-repeat;
`;
const ObjName = styled.span`
  margin-left: 4px;
  color: ${(p) => (p.$sel ? "#f0a830" : "#c8c8c8")};
`;

const OBJECTS = [
  { name: "Connector", kind: "conn", check: true },
  { name: "Cube", tags: true },
  { name: ">", tags: true, live: true },
  { name: "<", tags: true, live: true, sel: true },
];

const ObjectList = () => (
  <ListWrap>
    <ObjectTable>
      <colgroup><col width="92" /><col width="42" /><col /></colgroup>
      <tbody>
        {OBJECTS.map((o, i) => (
          <tr key={o.name}>
            <td><div><Branch $last={i === 3} />{o.kind ? <ConnectorIcon /> : <PolyObj />}<ObjName $sel={o.sel}>{o.name}</ObjName></div></td>
            <td>
              <div>
                <svg width="38" height="18" viewBox="0 0 38 18" fill="none">
                  <rect x="4" y="3" width="12" height="12" rx="1.500" fill="#8c8c8c" /><path d="M6 13l8-8" stroke="#444" strokeWidth="1.300" />
                  <circle cx="23" cy="5" r="2.500" fill={o.live ? GREEN : "#8c8c8c"} /><circle cx="23" cy="13" r="2.500" fill={o.live ? GREEN : "#8c8c8c"} />
                  {o.check && <path d="M28 9l3 3 6-7" stroke={GREEN} strokeWidth="1.500" />}
                </svg>
              </div>
            </td>
            <td>
              <div>
                {o.tags && (
                  <svg width="36" height="18" viewBox="0 0 36 18" fill="none">
                    <circle cx="5" cy="5" r="3.600" fill="#c8782f" /><circle cx="4" cy="4" r="1.300" fill="#e6aa70" /><circle cx="11.500" cy="12" r="3.600" fill="#c8782f" /><circle cx="10.500" cy="11" r="1.300" fill="#e6aa70" />
                    <rect x="22" y="2" width="13" height="13" fill="#111" stroke="#d9893f" strokeWidth="1.200" />
                    <path d="M23 3h2v2h-2zM27 3h3v2h-3zM32 3h2v2h-2zM25 5h2v2h-2zM30 5h2v2h-2zM23 7h2v3h-2zM27 7h3v3h-3zM32 7h2v3h-2zM25 10h2v2h-2zM30 10h2v2h-2zM23 12h2v2h-2zM27 12h3v2h-3zM32 12h2v2h-2z" fill="#f2f2f2" />
                  </svg>
                )}
              </div>
            </td>
          </tr>
        ))}
      </tbody>
    </ObjectTable>
    <MarkSlot $x={4} $y={40} $w={48} $h={39}><Mark inset="0" /></MarkSlot>
  </ListWrap>
);

const ObjTitle = styled.div`
  display: flex;
  align-items: center;
  gap: 6px;
  height: 28px;
  padding-left: 4px;
  border-top: 1px solid #4d4d4d;
`;
const Tabs = styled.div`
  display: flex;
  gap: 1px;
  margin-left: 3px;
  button { min-width: 41px; height: 18px; background: #5a5a5a; line-height: 18px; }
  button:first-child { background: #88a3cf; color: #111; border-radius: 2px 0 0 2px; }
`;
const Attr = styled.div`
  margin: 0 3px 0 2px;
  h3 { margin: 8px 2px 2px; font-size: 11px; font-weight: 700; line-height: 17px; color: #ececec; }
`;
const Fold = styled.button`
  display: flex;
  align-items: center;
  gap: 4px;
  width: 100%;
  height: 17px;
  margin-bottom: 3px;
  padding-left: 10px;
  background: #4d4d4d;
`;
const AttrGroup = styled.div`
  padding: 4px 0 2px;
  border-top: 1px solid #4d4d4d;
`;
const AttrRow = styled.div`
  display: grid;
  grid-template-columns: 24px 95px 1fr;
  align-items: center;
  height: ${(p) => p.$h || 20}px;
  color: ${(p) => (p.$off ? "#777" : "#c8c8c8")};
`;
const Leader = styled.span`
  display: flex;
  white-space: nowrap;
  padding-right: 5px;
  &::after {
    content: "";
    flex: 1;
    height: 12px;
    margin-left: 2px;
    background: repeating-linear-gradient(to right, #b4b4b4 0 1px, transparent 1px 7px) bottom / 100% 1px no-repeat;
  }
`;
const Control = styled.span`
  display: flex;
  align-items: center;
  gap: 3px;
  margin-left: 4px;
`;
const DropStub = styled.button`
  display: grid;
  place-items: center;
  width: 11px;
  height: 17px;
  border-radius: 2px;
  background: #5a5a5a;
`;
const Swatch = styled.button`
  width: 76px;
  height: 17px;
  border: 1px solid #4d4d4d;
  margin-right: 6px;
`;
const Opener = styled.span`
  display: flex;
  align-items: center;
  > ${Leader} { flex: 1; }
  > svg { margin-right: -2px; }
`;

const Key = ({ off }) => (
  <Ico s={16} vb={16}>
    {!off && <circle cx="8" cy="8" r="6.700" stroke="#777" strokeWidth="1.400" />}
    <circle cx="8" cy="8" r="4" fill={off ? "#4d4d4d" : "#8f8f8f"} />
  </Ico>
);

const SIDE_GROUPS = [
  ["0 0 12px", ["editable"]],
  ["0 0 4px", ["model", "texture"]],
  ["0 0 4px", ["point", "edge", "poly"]],
  ["0 0 12px", ["axis"]],
  ["0 0 12px", ["soloOff", "soloOn", "soloHi"]],
  ["0 0 12px", ["magnet"]],
  ["0", ["plane", "planeLock", "planeAuto"]],
];
const ACTIVE = ["move", "model", "soloOff", "planeLock"];

const ToolGroup = ({ items, m, col }) => (
  <Group $m={m} $col={col}>
    {items.map((k) => (
      <Tool key={k} $on={ACTIVE.includes(k)} $edge={k === "extrude" || k === "lattice"} $lit={k === "cloner"} aria-label={k}>
        {ICONS[k]}
      </Tool>
    ))}
  </Group>
);

export default function App() {
  return (
    <Window>
      <GlobalStyle />
      <TitleBar>
        <Logo />
        <h1>Cinema 4D R21.115 (RC) - [Untitled 2 *] - Main</h1>
        <WinButton aria-label="Minimize"><Ico s={11} vb={11}><path d="M0 4.500h11" stroke="#111" /></Ico></WinButton>
        <WinButton $gap={29} aria-label="Restore"><Ico s={11} vb={11}><path d="M.5 2.500h8v8h-8zM2.500 2.500v-2h8v8h-2" stroke="#111" /></Ico></WinButton>
        <WinButton $gap={30} aria-label="Close"><Ico s={11} vb={11}><path d="M.5.500l10 10M10.500.500l-10 10" stroke="#111" strokeWidth="1.200" /></Ico></WinButton>
      </TitleBar>

      <MenuBar>
        {MENUS.map(([name, tone]) => (
          <MenuSlot key={name} $open={name === "Mesh"}>
            <MenuWord $tone={tone}>{name}</MenuWord>
            {name === "Mesh" && <MeshMenu />}
          </MenuSlot>
        ))}
        <BarRight>
          <label>Node Space:<Drop w={167} value="Current (Standard/Physical)" label="Node Space" /></label>
          <label>Layout:<Drop w={164} value="Startup" label="Layout" /></label>
          <Search />
        </BarRight>
      </MenuBar>

      <Body>
        <WorkArea>
          <Toolbar>
            <GripV />
            <ToolGroup items={["undo", "redo"]} m="0 12px 0 3px" />
            <ToolGroup items={["select", "move", "scale", "rotate"]} m="0 4px 0 0" />
            <ToolGroup items={["psr"]} m="0 204px 0 0" />
            <ToolGroup items={["render", "renderPv", "renderSet"]} m="0 12px 0 0" />
            <ToolGroup items={["cube", "pen", "subdiv", "extrude", "lattice", "cloner", "field", "bend"]} m="0 4px 0 0" />
            <ToolGroup items={["floor", "camera", "light"]} />
          </Toolbar>

          <Middle>
            <SideTools>
              <GripH />
              {SIDE_GROUPS.map(([m, items]) => (
                <ToolGroup key={items[0]} items={items} m={m} col />
              ))}
              <MarkSlot $x={1} $y={56} $w={39} $h={31}><Mark inset="0" /></MarkSlot>
            </SideTools>

            <Center>
              <ViewPanel>
                <PanelBar $gap={13} $burger={-3}>
                  <Burger $c="#dcdcdc" aria-label="View menu" />
                  {["View", "Cameras", "Display"].map((t) => <MenuWord key={t}>{t}</MenuWord>)}
                  <MenuWord $tone={1}>Options</MenuWord>
                  <BarIcons>
                    <ViewportIcon w={1.8} d="M8 1v4M8 11v4M1 8h4M11 8h4M6 3l2-2 2 2M6 13l2 2 2-2M3 6L1 8l2 2M13 6l2 2-2 2" />
                    <ViewportIcon d="M8 1v13M5 4l3-3 3 3M3 9l5 5 5-5M4 7h8" />
                    <ViewportIcon w={1.8} d="M6 14A6.500 6.500 0 0 1 4 3M10 2a6.500 6.500 0 0 1 2 11M2 2l3 1-1 3M14 14l-3-1 1-3" />
                    <ViewportIcon d="M1.500 1.500h13v13h-13zM1.500 8h6v6.500" />
                  </BarIcons>
                </PanelBar>
                <Stage>
                  <Scene />
                  <Chip $at="1px auto auto 1px">Perspective</Chip>
                  <Chip $at="1px auto auto 628px">
                    Default Camera
                    <Ico s={14} vb={34}><circle cx="9" cy="10" r="5" fill="#b7dbff" /><circle cx="22" cy="10" r="6" fill="#b7dbff" /><path d="M4 19h20v4l8-4v12l-8-3v3H9v-6H4z" fill="#111" /></Ico>
                  </Chip>
                  <Chip $at="auto 14px 4px auto">Grid Spacing : 100 cm</Chip>
                  <AxisCenterDialog />
                </Stage>
              </ViewPanel>

              <Timeline>
                <GripV $h={18} />
                <TimeRuler />
                <Num w={74} value="0 F" label="Current frame" />
              </Timeline>
              <Transport>
                <GripV $h={18} />
                <Num w={76} value="0 F" label="Start frame" />
                <RangeBar><i /><span>0 F</span><span>90 F</span><i /></RangeBar>
                <Num w={75} value="90 F" label="End frame" />
                <PlayGroup items={["start"]} m="0 12px 0 11px" />
                <PlayGroup items={["prevKey", "prev", "play", "next", "nextKey"]} m="0 12px 0 0" />
                <PlayGroup items={["end"]} m="0 12px 0 0" />
                <PlayGroup items={["rec", "auto"]} m="0 12px 0 0" />
                <PlayGroup items={["keySel"]} m="0 4px 0 0" />
                <PlayGroup items={["move", "scale", "rotate", "param", "dots"]} on m="0 12px 0 0" />
                <PlayGroup items={["film"]} on />
              </Transport>

              <BottomRow>
                <Panel>
                  <PanelBar $gap={13} $burger={-3}>
                    <Burger aria-label="Material menu" />
                    <MenuWord $tone={1}>Create</MenuWord>
                    <MenuWord $tone={1}>Edit</MenuWord>
                    {["View", "Select", "Material", "Texture"].map((t) => <MenuWord key={t}>{t}</MenuWord>)}
                  </PanelBar>
                </Panel>
                <Panel $w={329}>
                  <PanelBar $gap={12}>
                    <Burger aria-label="Coordinates menu" />
                    <CoordHead><span>Position</span><span>Size</span><span>Rotation</span></CoordHead>
                  </PanelBar>
                  <CoordGrid>
                    {COORDS.flatMap((row, r) =>
                      [0, 2, 4].flatMap((c) => [
                        <span key={`l${r}${c}`}>{row[c]}</span>,
                        <Num key={`v${r}${c}`} value={row[c + 1]} label={`${row[c]} ${c}`} />,
                      ])
                    )}
                    <PushRow><Drop value="Object (Rel)" label="Coordinate mode" /></PushRow>
                    <PushRow><Drop value="Size" label="Size mode" /></PushRow>
                    <PushRow><PushButton>Apply</PushButton></PushRow>
                  </CoordGrid>
                </Panel>
              </BottomRow>
            </Center>
          </Middle>

          <StatusBar><Burger aria-label="Status menu" />Axis Center</StatusBar>
        </WorkArea>

        <Managers>
          <Manager $flex={468}>
            <ManagerMain>
              <PanelBar $gap={14} $burger={-4}>
                <Burger aria-label="Object manager menu" />
                <MenuWord>File</MenuWord>
                <MenuWord>Edit</MenuWord>
                <MenuWord $tone={1}>View</MenuWord>
                <MenuWord>Object</MenuWord>
                <MenuWord $tone={1}>Tags</MenuWord>
                <MenuWord>Bookmarks</MenuWord>
                <BarIcons>
                  <Search />
                  <Ico s={16} vb={16}><path d="M8 1.500L1.500 8.500H4v6h8v-6h2.500z" stroke="#888" strokeWidth="1.300" /></Ico>
                  <Ico s={16} vb={16}><path d="M1.500 1.500h13L10 8v6l-3-1.500V8z" stroke="#888" strokeWidth="1.400" /></Ico>
                  <PlusBox />
                </BarIcons>
              </PanelBar>
              <ObjectList />
            </ManagerMain>
            <TabStrip><SideTab $on>Objects</SideTab><SideTab>Takes</SideTab><SideTab>Content Browser</SideTab></TabStrip>
          </Manager>

          <Manager $flex={558}>
            <ManagerMain>
              <PanelBar $gap={14} $burger={-4}>
                <Burger aria-label="Attribute manager menu" />
                {["Mode", "Edit", "User Data"].map((t) => <MenuWord key={t}>{t}</MenuWord>)}
                <BarIcons>
                  <ViewportIcon w={2} d="M16 8H2M7 3L2 8l5 5" />
                  <Ico s={16} vb={16}><path d="M0 8h14M9 3l5 5-5 5" stroke="#555" strokeWidth="1.600" /></Ico>
                  <ViewportIcon w={2} d="M8 16V2M3 7l5-5 5 5" />
                  <Search />
                  <Ico s={16} vb={16}><path d="M2.500 6.500h11v8h-11zM5 6.500V4q3-5 6 0v2.500M7.500 10.500h1" stroke="#888" strokeWidth="1.500" /></Ico>
                  <Ico s={16} vb={16}><circle cx="8" cy="8" r="6.500" stroke="#888" strokeWidth="1.400" /><circle cx="8" cy="8" r="2.300" stroke="#888" strokeWidth="1.400" /></Ico>
                  <PlusBox />
                </BarIcons>
              </PanelBar>
              <ObjTitle><PolyObj s={18} />Polygon Object [&lt;]</ObjTitle>
              <Tabs><button>Basic</button><button>Coord.</button><button>Phong</button></Tabs>
              <Attr>
                <h3>Basic Properties</h3>
                <Fold><Ico s={7} vb={8}><path d="M1 0l5 4-5 4z" fill="#ddd" /></Ico>Icon Settings</Fold>
                <AttrGroup>
                  <AttrRow $h={21}><i /><Leader>Name</Leader><Control><FieldBox><input aria-label="Name" defaultValue="<" /></FieldBox></Control></AttrRow>
                  <AttrRow $h={21}>
                    <i /><Leader>Layer</Leader>
                    <Control>
                      <FieldBox><input aria-label="Layer" defaultValue="" /></FieldBox>
                      <DropStub aria-label="Choose layer"><Ico s={8} vb={8}><path d="M1 2.500l3 3 3-3" stroke="#ddd" strokeWidth="1.300" /></Ico></DropStub>
                      <Ico s={18} vb={18}><circle cx="9" cy="9" r="8" stroke="#999" strokeWidth="1.200" /><path d="M5 5l8 3-3 1.500 3 4-1.500 1-3-4L7 13z" fill="#aaa" /></Ico>
                    </Control>
                  </AttrRow>
                </AttrGroup>
                <AttrGroup>
                  <AttrRow><Key /><Leader>Visible in Editor</Leader><Control><Drop value="On" label="Visible in Editor" /></Control></AttrRow>
                  <AttrRow><Key /><Leader>Visible in Renderer</Leader><Control><Drop value="On" label="Visible in Renderer" /></Control></AttrRow>
                </AttrGroup>
                <AttrGroup>
                  <AttrRow><Key /><Leader>Display Color</Leader><Control><Drop value="Off" label="Display Color" /></Control></AttrRow>
                  <AttrRow $off>
                    <Key off />
                    <Opener><Leader>Color</Leader><Ico s={6} vb={6}><path d="M1 0l3 3-3 3" stroke="#aaa" strokeWidth="1.300" /></Ico></Opener>
                    <Control>
                      <Swatch disabled aria-label="Color" />
                      <Ico s={18} vb={18}><path d="M2 16l1-4 6-6 3 3-6 6z" stroke="#5c5c5c" strokeWidth="1.400" /><path d="M8 4l6 6 1-1-2-2 3-3q0-3-3-3l-3 3-1-1z" fill="#5c5c5c" /></Ico>
                    </Control>
                  </AttrRow>
                  <AttrRow><Key /><Leader>X-Ray</Leader><Control><Tick name="X-Ray" /></Control></AttrRow>
                </AttrGroup>
              </Attr>
            </ManagerMain>
            <TabStrip><SideTab $on>Attributes</SideTab><SideTab>Layers</SideTab><SideTab>Structure</SideTab></TabStrip>
          </Manager>
        </Managers>
      </Body>
    </Window>
  );
}
